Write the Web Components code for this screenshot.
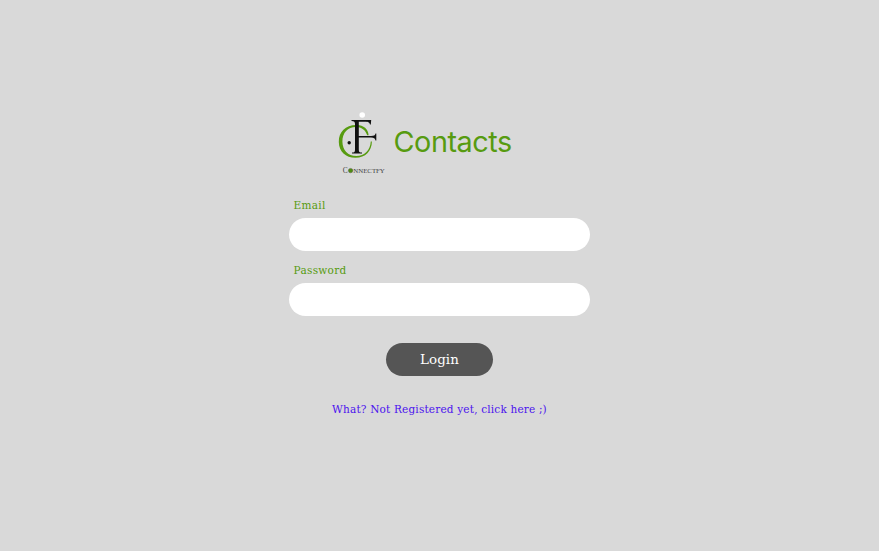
<!DOCTYPE html>
<html lang="en">
<head>
<meta charset="utf-8">
<title>Contacts</title>
<style>body{margin:0;background:#d9d9d9}</style>
</head>
<body>
<login-page></login-page>
<script>
const define = (name, html) => customElements.define(name, class extends HTMLElement {
  constructor() {
    super();
    this.attachShadow({mode: 'open'}).innerHTML = html;
  }
});

define('brand-logo', `
<style>:host{display:block;width:52px;height:68px}svg{display:block}</style>
<svg width="52" height="68" viewBox="335 108 52 68" aria-label="Connectfy">
  <circle cx="362.2" cy="115" r="2.8" fill="#fff"/>
  <path fill="#579b10" d="M368.6 135.2C368.2 129 363.5 125.3 357 125.1C346 124.7 338.6 131.7 338.8 142C339 151.5 345.5 157.8 355.5 157.8C365.5 157.8 371.8 151 371.9 141.5L370.8 141.5C370.2 150.4 364.5 156 356.4 156C347.8 156 342.6 150.3 342.4 141.7C342.2 132.6 348 126.9 355.8 126.9C361.6 126.9 365.4 129.9 367.2 135.2Z"/>
  <path fill="#111" d="M351.5 120H371.2L370.8 124.6H370C369.6 122.5 368.5 121.7 365 121.7H358.8V136H371C374.2 136 375 135.4 375.5 133.6H376.3V140.6H375.5C375 138.3 374 137.6 371 137.6H358.8V149.5C358.8 152 359.4 152.5 362 152.6V153.6H352V152.6C354.5 152.5 355 152 355 149.5V124C355 121.8 354.3 121.2 351.5 121Z"/>
  <circle cx="349.2" cy="142.8" r="1.7" fill="#111"/>
  <g fill="#444" font-family="Liberation Serif,serif">
    <text x="342.7" y="172.8" font-size="7.4">C</text>
    <text x="353.3" y="172.8" font-size="6.4" textLength="31.5" lengthAdjust="spacingAndGlyphs">NNECTFY</text>
  </g>
  <circle cx="350.6" cy="170.6" r="2.2" fill="#4d8d12" stroke="#5c5c45" stroke-width=".5"/>
</svg>`);

define('brand-header', `
<style>
:host{display:flex;align-items:flex-start;width:209px}
h1{margin:15px 0 0 6.5px;font:400 28.8px/38px Inter,sans-serif;color:#579b10;letter-spacing:-.45px}
</style><brand-logo></brand-logo><h1><slot></slot></h1>`);

define('form-field', `
<style>
:host{display:block;width:301px}
label{display:block}
span{display:block;padding-left:4.5px;font:10.5px/15px "DejaVu Serif",serif;color:#579b10;letter-spacing:.3px}
input{display:block;box-sizing:border-box;width:100%;height:33px;margin-top:5px;border:0;border-radius:17px;padding:0 14px;background:#fff;outline:0}
</style><label><span><slot></slot></span><input></label>`);

define('login-button', `
<style>
:host{display:block}
button{display:block;width:107px;height:33px;padding:0;border:0;border-radius:17px;background:#555;color:#fff;font:13.4px/33px "DejaVu Serif",serif;letter-spacing:.1px}
</style><button><slot></slot></button>`);

define('register-link', `
<style>
:host{display:block}
a{font:10.5px/15px "DejaVu Serif",serif;color:#4b12ee;text-decoration:none;white-space:nowrap;display:block;letter-spacing:.18px}
</style><a href="#"><slot></slot></a>`);

define('login-page', `
<style>
:host{display:flex;flex-direction:column;align-items:center;box-sizing:border-box;height:551px;padding-top:108px;background:#d9d9d9}
form-field{margin-top:12px}
form-field.first{margin-top:22px}
login-button{margin-top:27px}
register-link{margin-top:26px}
</style>
<brand-header>Contacts</brand-header>
<form-field class="first">Email</form-field>
<form-field>Password</form-field>
<login-button>Login</login-button>
<register-link>What? Not Registered yet, click here ;)</register-link>`);
</script>
</body>
</html>
